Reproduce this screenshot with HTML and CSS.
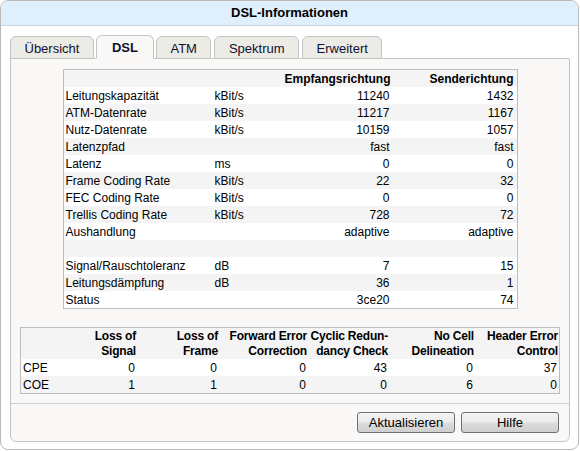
FILE: index.html
```html
<!DOCTYPE html>
<html lang="de">
<head>
    <meta charset="UTF-8">
    <title>DSL-Informationen</title>
    <link rel="stylesheet" href="styles.css">
</head>
<body>
<div class="window">
    <!-- Titel -->
    <div class="titlebar">DSL-Informationen</div>
    <div class="content">
        <!-- Reiter -->
        <div class="tabs">
            <div class="tab">Übersicht</div>
            <div class="tab active">DSL</div>
            <div class="tab">ATM</div>
            <div class="tab">Spektrum</div>
            <div class="tab">Erweitert</div>
        </div>
        <div class="panel">
            <div class="panelBody">
                <!-- Leitungswerte -->
                <div class="tableBox mainBox">
                    <table class="mainTable">
                        <colgroup>
                            <col class="cName">
                            <col class="cUnit">
                            <col class="cDown">
                            <col class="cUp">
                        </colgroup>
                        <thead>
                        <tr>
                            <th></th>
                            <th></th>
                            <th class="num">Empfangsrichtung</th>
                            <th class="num">Senderichtung</th>
                        </tr>
                        </thead>
                        <tbody>
                        <tr><td>Leitungskapazität</td><td>kBit/s</td><td class="num">11240</td><td class="num">1432</td></tr>
                        <tr><td>ATM-Datenrate</td><td>kBit/s</td><td class="num">11217</td><td class="num">1167</td></tr>
                        <tr><td>Nutz-Datenrate</td><td>kBit/s</td><td class="num">10159</td><td class="num">1057</td></tr>
                        <tr><td>Latenzpfad</td><td></td><td class="num">fast</td><td class="num">fast</td></tr>
                        <tr><td>Latenz</td><td>ms</td><td class="num">0</td><td class="num">0</td></tr>
                        <tr><td>Frame Coding Rate</td><td>kBit/s</td><td class="num">22</td><td class="num">32</td></tr>
                        <tr><td>FEC Coding Rate</td><td>kBit/s</td><td class="num">0</td><td class="num">0</td></tr>
                        <tr><td>Trellis Coding Rate</td><td>kBit/s</td><td class="num">728</td><td class="num">72</td></tr>
                        <tr><td>Aushandlung</td><td></td><td class="num">adaptive</td><td class="num">adaptive</td></tr>
                        <tr><td>&nbsp;</td><td></td><td></td><td></td></tr>
                        <tr><td>Signal/Rauschtoleranz</td><td>dB</td><td class="num">7</td><td class="num">15</td></tr>
                        <tr><td>Leitungsdämpfung</td><td>dB</td><td class="num">36</td><td class="num">1</td></tr>
                        <tr><td>Status</td><td></td><td class="num">3ce20</td><td class="num">74</td></tr>
                        </tbody>
                    </table>
                </div>
                <!-- Fehlerzaehler -->
                <div class="tableBox errorBox">
                    <table class="errorTable">
                        <colgroup>
                            <col class="eName">
                            <col class="e1">
                            <col class="e2">
                            <col class="e3">
                            <col class="e4">
                            <col class="e5">
                            <col class="e6">
                        </colgroup>
                        <thead>
                        <tr>
                            <th></th>
                            <th>Loss of<br>Signal</th>
                            <th>Loss of<br>Frame</th>
                            <th>Forward Error<br>Correction</th>
                            <th>Cyclic Redun-<br>dancy Check</th>
                            <th>No Cell<br>Delineation</th>
                            <th>Header Error<br>Control</th>
                        </tr>
                        </thead>
                        <tbody>
                        <tr><td>CPE</td><td class="num">0</td><td class="num">0</td><td class="num">0</td><td class="num">43</td><td class="num">0</td><td class="num">37</td></tr>
                        <tr><td>COE</td><td class="num">1</td><td class="num">1</td><td class="num">0</td><td class="num">0</td><td class="num">6</td><td class="num">0</td></tr>
                        </tbody>
                    </table>
                </div>
            </div>
            <!-- Knoepfe -->
            <div class="panelFoot">
                <button class="btn">Aktualisieren</button>
                <button class="btn">Hilfe</button>
            </div>
        </div>
    </div>
</div>
</body>
</html>
```

FILE: styles.css
```css
*{
    box-sizing: border-box;
}
body{
    margin: 0;
    background: #fff;
    color: #000;
    font-family: "Liberation Sans", Arial, sans-serif;
    font-size: 12px;
}
/* Fenster */
.window{
    width: 579px;
    height: 450px;
    border: 1px solid #b9b9b9;
    border-radius: 8px;
    overflow: hidden;
    background: #fff;
    display: flex;
    flex-direction: column;
}
.titlebar{
    height: 25px;
    line-height: 24px;
    background: #dff0fc;
    border-bottom: 1px solid #c5d3dd;
    text-align: center;
    font-size: 13px;
    font-weight: bold;
}
.content{
    flex: 1;
    display: flex;
    flex-direction: column;
    padding: 9px 8px 7px 9px;
}
/* Reiter */
.tabs{
    display: flex;
    align-items: flex-end;
    gap: 3px;
    margin-bottom: -1px;
    position: relative;
    z-index: 1;
}
.tab{
    height: 23px;
    line-height: 21px;
    padding: 1px 13.5px 0;
    border: 1px solid #c4c4c4;
    border-radius: 6px 6px 0 0;
    background: #ecebe5;
    color: #10102c;
    font-size: 13px;
}
.tab.active{
    height: 24px;
    line-height: 22px;
    padding: 1px 15px 0;
    margin: 0 -1px;
    background: #f9f8f6;
    border-bottom-color: #f9f8f6;
    font-weight: bold;
}
.panel{
    flex: 1;
    display: flex;
    flex-direction: column;
    border: 1px solid #c4c4c4;
    border-radius: 0 0 6px 6px;
    background: #f9f8f6;
}
.panelBody{
    flex: 1;
    padding: 10px 9px 9px;
}
/* Tabellen */
.tableBox{
    border: 1px solid #bdbdbd;
    background: #fff;
}
.mainBox{
    width: 455px;
    margin: 0 auto;
}
.errorBox{
    margin-top: 18px;
}
table{
    width: 100%;
    border-collapse: collapse;
    border-spacing: 0;
    table-layout: fixed;
}
th,td{
    height: 17px;
    line-height: 16px;
    padding: 1px 3px 0 2px;
    white-space: nowrap;
    text-align: left;
    vertical-align: middle;
}
th{
    font-weight: bold;
}
.num{
    text-align: right;
}
thead tr,
tbody tr:nth-child(even){
    background: #f4f4f4;
}
.cName{ width: 149px; }
.cUnit{ width: 70px; }
.cDown{ width: 110px; }
.cUp{ width: 124px; }

.eName{ width: 34px; }
.e1{ width: 82px; }
.e2{ width: 82px; }
.e3{ width: 89px; }
.e4{ width: 81px; }
.e5{ width: 86px; }
.e6{ width: 84px; }
.errorTable th{
    height: 31px;
    line-height: 15px;
    padding: 1px 1px 0 0;
    text-align: right;
    letter-spacing: -0.2px;
}
.errorTable td{
    padding: 1px 2px 0 2px;
}
/* Knoepfe */
.panelFoot{
    height: 38px;
    border-top: 1px solid #cfcfcf;
    display: flex;
    justify-content: flex-end;
    align-items: center;
    gap: 6px;
    padding-right: 10px;
}
.btn{
    width: 98px;
    height: 21px;
    padding: 0;
    border: 1px solid #707070;
    border-radius: 3px;
    background: linear-gradient(#f3f3f3, #ebebeb 48%, #dddddd 52%, #cfcfcf);
    color: #000;
    font-family: "Liberation Sans", Arial, sans-serif;
    font-size: 13px;
}
```
